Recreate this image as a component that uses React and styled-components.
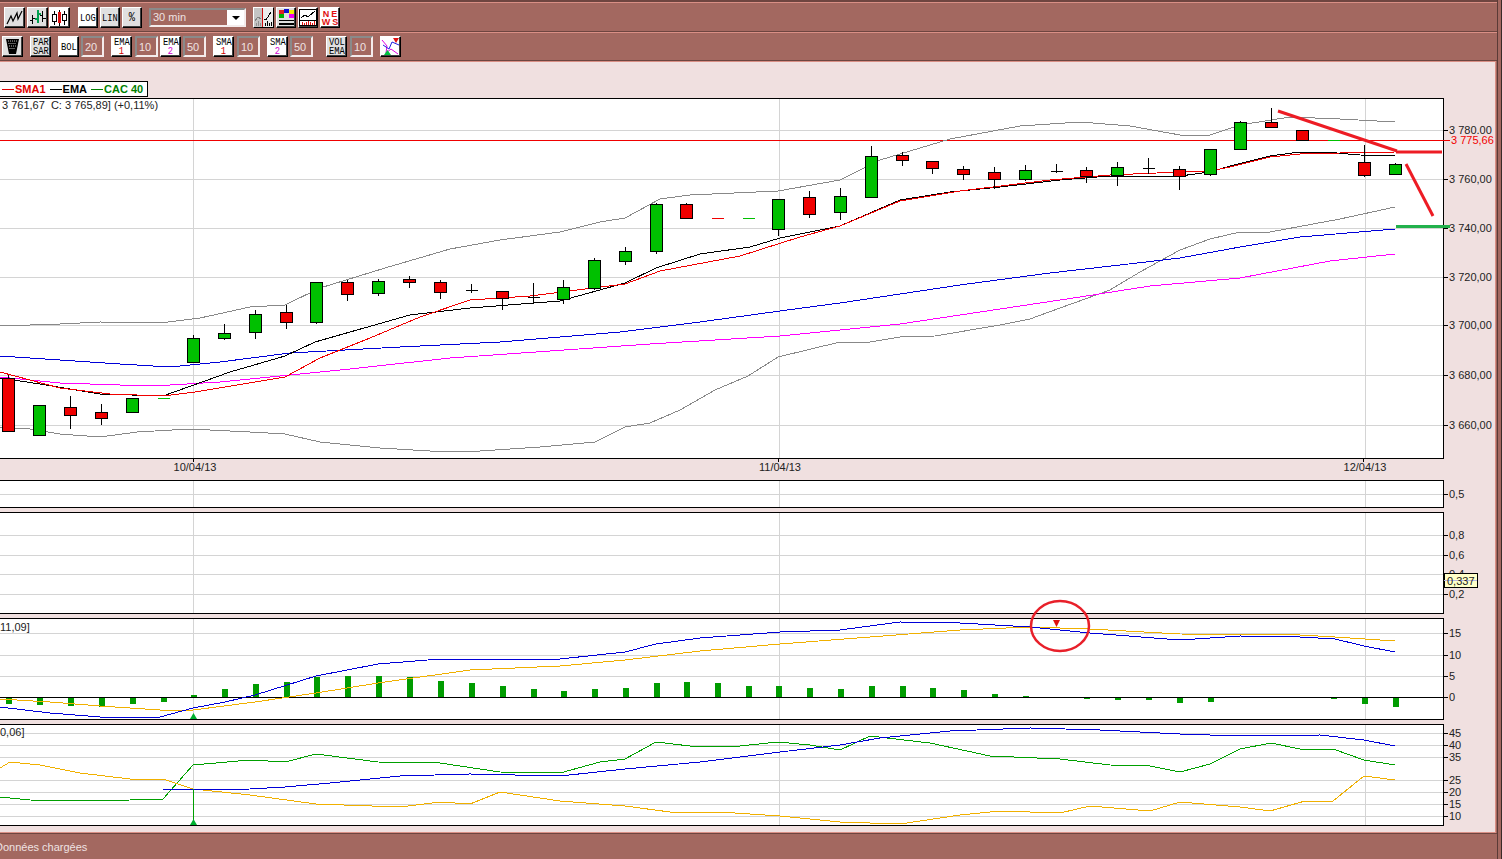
import styled, { createGlobalStyle } from "styled-components";

const GlobalStyle = createGlobalStyle`
  html, body {
    margin: 0;
    padding: 0;
    overflow: hidden;
    background: #f0e0e0;
    font-family: "Liberation Sans", Arial, sans-serif;
  }
`;

const Window = styled.div`
  width: 1502px;
  height: 859px;
  position: relative;
  display: flex;
  flex-direction: column;
  overflow: hidden;
  background: #f0e0e0;
`;

const WindowEdge = styled.div`
  position: absolute;
  top: 0;
  right: 0;
  width: 5px;
  height: 100%;
  box-sizing: border-box;
  background: #a36860;
  border-left: 1px solid #5a3a36;
  border-right: 1px solid #3a2a28;
  z-index: 2;
`;

const Toolbars = styled.div`
  height: 61px;
  box-sizing: border-box;
  background: #a36860;
  border-top: 2px solid #6e4540;
  border-bottom: 1px solid #6e4540;
  box-shadow: 0 1px 0 #d98f85;
  flex-shrink: 0;
`;

const Row = styled.div`
  height: ${(p) => p.$h}px;
  box-sizing: border-box;
  display: flex;
  align-items: center;
  padding-left: ${(p) => p.$left}px;
  border-top: 1px solid #d98f85;
  box-shadow: ${(p) => (p.$divided ? "inset 0 -1px 0 #6e4540" : "none")};
`;

const Group = styled.div`
  display: flex;
  align-items: center;
  gap: ${(p) => p.$gap ?? 3}px;
  margin-right: ${(p) => p.$after ?? 0}px;
`;

const Button = styled.div`
  width: ${(p) => p.$w ?? 21}px;
  height: 21px;
  box-sizing: border-box;
  display: flex;
  flex-direction: column;
  align-items: center;
  justify-content: center;
  background: ${(p) => (p.$on ? "#ffffff" : "#e0e0e0")};
  border: 1px solid;
  border-color: #ffffff #000000 #000000 #ffffff;
  box-shadow: inset -1px -1px 0 #404040;
  color: #000;
`;

const Label = styled.span`
  display: block;
  font-family: "Liberation Mono", "Courier New", monospace;
  font-size: ${(p) => p.$size ?? 11}px;
  line-height: ${(p) => p.$tall ?? 10}px;
  height: ${(p) => p.$tall ?? 10}px;
  color: ${(p) => p.$color ?? "#000"};
  transform: scaleX(0.8);
  white-space: nowrap;
`;

const Field = styled.input`
  width: 23px;
  height: 21px;
  box-sizing: border-box;
  padding: 0 0 0 2px;
  margin: 0;
  background: #a36860;
  border: 2px solid;
  border-color: #8a8a8a #f4ecec #f4ecec #8a8a8a;
  color: #efe2e2;
  font-family: "Liberation Sans", Arial, sans-serif;
  font-size: 11px;
  outline: none;
`;

const Combo = styled.div`
  width: 97px;
  height: 19px;
  box-sizing: border-box;
  display: flex;
  border: 2px solid;
  border-color: #8a8a8a #f4ecec #f4ecec #8a8a8a;
  margin: 0 7px;
`;

const ComboText = styled.div`
  flex: 1;
  color: #efe2e2;
  font-size: 11px;
  line-height: 15px;
  padding-left: 2px;
`;

const ComboArrow = styled.div`
  width: 17px;
  background: #fff;
  display: flex;
  align-items: center;
  justify-content: center;

  &::after {
    content: "";
    border-left: 4px solid transparent;
    border-right: 4px solid transparent;
    border-top: 4px solid #000;
  }
`;

const NewsText = styled.span`
  display: block;
  font-size: 9px;
  line-height: 8px;
  font-weight: 700;
  letter-spacing: 2px;
  margin-right: -2px;
  color: #e01010;
`;

const Workspace = styled.div`
  flex: 1;
  padding-top: 20px;
  position: relative;
`;

const WorkspaceEdge = styled.div`
  position: absolute;
  top: 0;
  right: 5px;
  width: 2px;
  height: 100%;
  box-sizing: border-box;
  background: #a36860;
  border-left: 1px solid #d98f85;
`;

const Legend = styled.div`
  width: 148px;
  height: 16px;
  box-sizing: border-box;
  display: flex;
  align-items: center;
  gap: 4px;
  padding-left: 2px;
  margin-bottom: 1px;
  background: #fff;
  border: 1px solid #000;
  border-left: none;
  font-size: 11px;
  font-weight: 700;
  white-space: nowrap;
`;

const LegendItem = styled.span`
  display: flex;
  align-items: center;
  color: ${(p) => p.$color};

  &::before {
    content: "";
    width: 12px;
    height: 1px;
    margin-right: 1px;
    background: ${(p) => p.$color};
  }
`;

const Frame = styled.div`
  width: 1444px;
  height: ${(p) => p.$h}px;
  box-sizing: border-box;
  background: #fff;
  border: 1px solid #000;
  border-left: none;
  margin-bottom: ${(p) => p.$after ?? 0}px;
`;

const Plot = styled.svg`
  display: block;
  overflow: visible;
`;

const AxisText = styled.text`
  font-family: "Liberation Sans", Arial, sans-serif;
  font-size: 11px;
  white-space: pre;
  fill: ${(p) => p.$color ?? "#222"};
`;

const DateStrip = styled.div`
  height: 21px;
  display: flex;
  gap: 485px;
  padding-left: 145px;
`;

const DateCell = styled.div`
  width: 100px;
  position: relative;
  text-align: center;
  font-size: 11px;
  line-height: 13px;
  padding-top: 2px;
  color: #222;

  &::before {
    content: "";
    position: absolute;
    top: 0;
    left: 48px;
    width: 1px;
    height: 3px;
    background: #000;
  }
`;

const Status = styled.div`
  height: 26px;
  box-sizing: border-box;
  flex-shrink: 0;
  background: #a36860;
  border-top: 1px solid #6e4540;
  box-shadow: 0 -1px 0 #d98f85;
  color: #efe2e2;
  font-size: 11px;
  line-height: 26px;
  text-indent: -5px;
`;

// all chart data below is in page pixels, read off the screen
const XS = [8, 39, 70, 101, 132, 163, 193, 224, 255, 286, 316, 347, 378, 409, 440, 471, 502, 533, 563, 594, 625, 656, 686, 717, 748, 778, 809, 840, 871, 902, 932, 963, 994, 1025, 1056, 1086, 1117, 1148, 1179, 1210, 1240, 1271, 1302, 1333, 1364, 1395];

// [high, top, bottom, low, colour] r red, g green, k black doji
const CANDLES = [
  [375, 378, 431, 431, "r"], [405, 405, 435, 436, "g"], [396, 407, 415, 429, "r"], [404, 412, 418, 425, "r"],
  [398, 398, 412, 412, "g"], [398, 398, 398, 398, "g"], [335, 338, 362, 362, "g"], [324, 333, 338, 340, "g"],
  [310, 314, 332, 339, "g"], [305, 312, 322, 329, "r"], [282, 282, 322, 324, "g"], [280, 282, 294, 301, "r"],
  [279, 281, 293, 296, "g"], [276, 279, 282, 288, "r"], [280, 282, 292, 299, "r"], [284, 290, 290, 293, "k"],
  [291, 291, 298, 310, "r"], [283, 297, 297, 303, "k"], [280, 287, 299, 304, "g"], [258, 260, 288, 290, "g"],
  [247, 251, 261, 265, "g"], [203, 204, 251, 254, "g"], [203, 204, 218, 219, "r"], [218, 218, 218, 218, "r"],
  [218, 218, 218, 218, "g"], [199, 199, 229, 236, "g"], [191, 197, 214, 218, "r"], [188, 196, 212, 220, "g"],
  [146, 156, 197, 197, "g"], [152, 155, 160, 166, "r"], [161, 161, 168, 174, "r"], [166, 169, 174, 180, "r"],
  [167, 172, 179, 189, "r"], [165, 170, 179, 181, "g"], [164, 171, 171, 173, "k"], [167, 170, 176, 183, "r"],
  [162, 167, 175, 186, "g"], [158, 168, 168, 174, "k"], [166, 169, 176, 190, "r"], [149, 149, 174, 176, "g"],
  [121, 122, 149, 150, "g"], [108, 122, 127, 127, "r"], [130, 130, 140, 140, "r"], [140, 140, 140, 140, "g"],
  [145, 162, 175, 177, "r"], [163, 164, 174, 175, "g"],
];

const BB_UP = "0,326 60,324 100,322 160,323 200,318 250,307 285,305 320,288 385,268 450,249 500,240 560,232 600,222 625,218 660,199 690,195 778,191 840,180 880,160 950,139 1020,126 1080,122 1130,126 1180,135 1210,135 1240,125 1290,117 1340,119 1395,122";
const BB_LOW = "0,427 30,429 60,434 100,437 137,432 190,429 250,432 285,434 320,442 380,448 430,451 480,451 540,447 595,442 625,427 650,423 680,410 715,390 748,376 778,357 840,342 870,342 900,337 935,336 1000,325 1030,319 1060,308 1110,290 1140,272 1180,250 1210,239 1240,232 1270,232 1340,219 1395,207";
const SMA_BLUE = "0,356 60,360 120,364 170,367 220,362 290,353 400,347 500,342 620,332 700,322 780,311 840,303 900,294 960,285 1050,273 1120,265 1180,258 1240,247 1300,237 1395,229";
const SMA_PINK = "0,377 60,383 120,385 170,385 220,382 290,375 350,369 450,358 550,351 650,344 780,336 900,324 1000,309 1080,297 1150,286 1240,278 1330,261 1395,254";
const EMA = "0,378 40,384 100,394 163,396 230,372 285,356 315,342 350,332 410,315 470,308 560,301 625,283 656,268 700,254 750,247 780,238 840,226 900,200 950,192 1000,187 1060,180 1110,176 1180,176 1210,172 1230,166 1270,156 1300,152 1325,152 1360,155 1395,156";
const SMA_RED = "0,372 60,388 110,394 163,396 195,392 285,377 320,358 370,338 420,317 470,300 530,296 625,284 660,271 740,256 800,237 840,226 900,201 960,191 1050,180 1110,175 1180,172 1210,171 1230,167 1270,157 1300,154 1340,153 1395,152";

const MACD_BARS = [-7, -8, -9, -10, -7, -5, 2, 8, 13, 15, 20, 21, 21, 20, 16, 14, 11, 8, 6, 8, 9, 14, 15, 14, 11, 11, 9, 8, 11, 11, 9, 7, 3, 1, 0, -2, -3, -3, -6, -5, -1, 0, -1, -2, -7, -10];
const MACD_BLUE = "0,707 50,713 100,717 160,717 193,708 225,702 255,695 316,676 378,664 440,659 560,659 625,652 656,644 700,638 780,632 840,630 900,622 960,623 1030,627 1090,633 1180,640 1240,636 1300,637 1335,639 1364,646 1395,652";
const MACD_ORANGE = "0,699 50,702 100,706 160,710 193,710 255,702 316,693 378,683 470,670 560,666 625,660 700,651 780,644 870,637 960,630 1030,627 1090,629 1180,634 1300,635 1335,637 1395,641";

const DMI_GREEN = "0,797 30,800 70,801 130,800 163,799 193,765 250,760 285,762 316,754 378,762 440,763 500,772 560,773 600,762 625,759 656,742 690,746 740,746 778,742 810,745 840,750 870,736 930,743 990,756 1060,759 1110,765 1150,766 1180,772 1210,764 1240,749 1271,743 1300,749 1333,749 1364,760 1395,765";
const DMI_BLUE = "163,789 193,790 250,789 285,787 330,783 400,776 470,774 560,776 625,769 700,762 780,752 840,745 880,738 950,731 1030,728 1100,730 1180,734 1240,736 1320,735 1364,740 1395,746";
const DMI_ORANGE = "0,768 10,762 40,765 80,773 130,779 163,779 193,789 250,795 316,804 400,807 440,802 470,804 500,792 560,801 625,806 670,812 720,812 780,816 840,822 900,824 960,815 1000,811 1060,813 1090,806 1150,811 1180,802 1240,807 1270,811 1305,801 1333,801 1364,776 1395,780";

const CANDLE_COLOR = { r: "#f00000", g: "#00c000", k: "#000000" };

const Curve = ({ points, color, width = 1 }) => (
  <polyline points={points} fill="none" stroke={color} strokeWidth={width} shapeRendering="crispEdges" />
);

const Grid = ({ rows, top, bottom }) => (
  <g stroke="#d4d4d4" shapeRendering="crispEdges">
    {rows.map((y) => (
      <line key={y} x1="0" x2="1443" y1={y + 0.5} y2={y + 0.5} />
    ))}
    {[193, 779, 1365].map((x) => (
      <line key={x} x1={x + 0.5} x2={x + 0.5} y1={top} y2={bottom} />
    ))}
  </g>
);

const Axis = ({ ticks }) => (
  <g>
    {ticks.map(([y, text]) => (
      <g key={text}>
        <line x1="1443" x2="1448" y1={y + 0.5} y2={y + 0.5} stroke="#000" shapeRendering="crispEdges" />
        <AxisText x="1449" y={y + 4}>{text}</AxisText>
      </g>
    ))}
  </g>
);

const Pane = ({ top, h, after, children }) => (
  <Frame $h={h} $after={after}>
    <Plot width="1443" height={h - 2} viewBox={`0 ${top + 1} 1443 ${h - 2}`}>
      {children}
    </Plot>
  </Frame>
);

const Candles = () => (
  <g shapeRendering="crispEdges">
    {CANDLES.map(([high, bodyTop, bodyBottom, low, c], i) => {
      const x = XS[i] + 0.5;
      if (bodyTop === bodyBottom && high === low) {
        return <line key={i} x1={x - 6} x2={x + 6} y1={bodyTop + 0.5} y2={bodyTop + 0.5} stroke={CANDLE_COLOR[c]} />;
      }
      if (bodyTop === bodyBottom) {
        return (
          <g key={i} stroke="#000">
            <line x1={x} x2={x} y1={high} y2={low} />
            <line x1={x - 6} x2={x + 6} y1={bodyTop + 0.5} y2={bodyTop + 0.5} />
          </g>
        );
      }
      return (
        <g key={i} stroke="#000">
          <line x1={x} x2={x} y1={high} y2={low} />
          <rect x={x - 6} y={bodyTop + 0.5} width="12" height={bodyBottom - bodyTop} fill={CANDLE_COLOR[c]} />
        </g>
      );
    })}
  </g>
);

const Triangle = ({ x, y, color, down }) => (
  <polygon
    points={down ? `${x - 3},${y} ${x + 4},${y} ${x + 0.5},${y + 7}` : `${x - 3},${y + 6} ${x + 4},${y + 6} ${x + 0.5},${y}`}
    fill={color}
  />
);

const LineIcon = () => (
  <svg width="17" height="15" viewBox="0 0 17 15">
    <polyline points="1,14 5,6 7,11 11,3 12,9 16,1" fill="none" stroke="#000" strokeWidth="1.2" />
  </svg>
);

const BarsIcon = () => (
  <svg width="17" height="17" viewBox="0 0 17 17" shapeRendering="crispEdges">
    <path d="M3.5 6v9M1 11h3M3.5 9h3M13.5 2v11M11 6h3M13.5 9h3" stroke="#000" fill="none" />
    <path d="M8.5 1v13M6 10h3M8.5 5h3" stroke="#00a050" strokeWidth="2" fill="none" />
  </svg>
);

const CandleIcon = () => (
  <svg width="17" height="17" viewBox="0 0 17 17" shapeRendering="crispEdges">
    <path d="M3.5 2v14M13.5 2v14" stroke="#000" />
    <rect x="1.5" y="5.5" width="4" height="7" fill="#fff" stroke="#000" />
    <path d="M8.5 1v16" stroke="#000" />
    <rect x="7" y="3" width="3" height="11" fill="#e01010" />
    <rect x="11.5" y="5.5" width="4" height="6" fill="#fff" stroke="#000" />
  </svg>
);

const TrashIcon = () => (
  <svg width="15" height="17" viewBox="0 0 15 17">
    <path d="M1 1h13l-3 15H4z" fill="#000" />
    <path d="M3 3h9M3.5 5.5h8M4 8h7M4.5 10.5h6" stroke="#b8b8b8" strokeDasharray="1 1" fill="none" />
  </svg>
);

const CrossIcon = () => (
  <svg width="19" height="19" viewBox="0 0 19 19">
    <polyline points="1,3 6,9 5,16 10,12 17,17" fill="none" stroke="#e000e0" />
    <polyline points="2,8 8,12 11,5 18,8" fill="none" stroke="#2020e0" />
    <polygon points="12,1 18,1 15,6" fill="#e01010" />
    <polygon points="3,18 10,18 6.5,13" fill="#00c040" />
  </svg>
);

const CursorIcon = () => (
  <svg width="19" height="19" viewBox="0 0 19 19" shapeRendering="crispEdges">
    <rect x="0" y="0" width="8" height="19" fill="#c4c4c4" />
    <rect x="8" y="0" width="11" height="19" fill="#ececec" />
    <path d="M8.5 0v19" stroke="#d01010" />
    <path d="M1 13l3-4 3 2" stroke="#808080" fill="none" />
    <path d="M10 11l2 1 5-8" stroke="#000" fill="none" />
    <path d="M2 18v-3M4 18v-5M6 18v-3" stroke="#909090" />
    <path d="M11 18v-3M13 18v-5M15 18v-3M17 18v-4" stroke="#000" />
  </svg>
);

const PaletteIcon = () => (
  <svg width="17" height="17" viewBox="0 0 17 17" shapeRendering="crispEdges">
    <rect x="1" y="1" width="5" height="4" fill="#e02020" />
    <rect x="6" y="0" width="5" height="4" fill="#1010d0" />
    <rect x="11" y="1" width="5" height="4" fill="#f0f000" />
    <rect x="1" y="5" width="5" height="4" fill="#00b000" />
    <rect x="11" y="5" width="5" height="4" fill="#f000f0" />
    <rect x="1" y="11" width="15" height="1" fill="#000" />
    <rect x="1" y="14" width="15" height="2" fill="#000" />
  </svg>
);

const StudyIcon = () => (
  <svg width="18" height="17" viewBox="0 0 18 17" shapeRendering="crispEdges">
    <rect x="0.5" y="0.5" width="17" height="16" fill="#fff" stroke="#000" />
    <path d="M2 9l4-3 3 2 7-6" stroke="#000" fill="none" />
    <path d="M1 11.5h16" stroke="#000" />
    <path d="M3 16v-3M5 16v-2M7 16v-3M9 16v-4M11 16v-3M13 16v-2M15 16v-4" stroke="#e01010" />
  </svg>
);

const AverageButton = ({ kind, period, color }) => (
  <Button $on>
    <Label>{kind}</Label>
    <Label $color={color} $tall={9}>{period}</Label>
  </Button>
);

export default function App() {
  return (
    <>
      <GlobalStyle />
      <Window>
        <WindowEdge />
        <Toolbars>
          <Row $h={30} $left={4} $divided>
            <Group $gap={1.5} $after={8}>
              <Button><LineIcon /></Button>
              <Button><BarsIcon /></Button>
              <Button $on><CandleIcon /></Button>
            </Group>
            <Group $gap={2}>
              <Button $w={20} $on><Label>LOG</Label></Button>
              <Button $w={20}><Label>LIN</Label></Button>
              <Button $w={20}><Label $size={13}>%</Label></Button>
            </Group>
            <Combo>
              <ComboText>30 min</ComboText>
              <ComboArrow />
            </Combo>
            <Group $gap={2}>
              <Button><CursorIcon /></Button>
              <Button $w={20}><PaletteIcon /></Button>
              <Button $w={20} $on><StudyIcon /></Button>
              <Button $w={20} $on>
                <NewsText>NE</NewsText>
                <NewsText>WS</NewsText>
              </Button>
            </Group>
          </Row>
          <Row $h={28} $left={2}>
            <Group $after={7}><Button><TrashIcon /></Button></Group>
            <Group $after={7}>
              <Button>
                <Label>PAR</Label>
                <Label $tall={9}>SAR</Label>
              </Button>
            </Group>
            <Group $gap={2} $after={7}>
              <Button $on><Label>BOL</Label></Button>
              <Field readOnly value="20" />
            </Group>
            <Group $after={2}>
              <AverageButton kind="EMA" period="1" color="#d00000" />
              <Field readOnly value="10" />
            </Group>
            <Group $gap={2} $after={7}>
              <AverageButton kind="EMA" period="2" color="#d000d0" />
              <Field readOnly value="50" />
            </Group>
            <Group $after={7}>
              <AverageButton kind="SMA" period="1" color="#d00000" />
              <Field readOnly value="10" />
            </Group>
            <Group $gap={2} $after={13}>
              <AverageButton kind="SMA" period="2" color="#d000d0" />
              <Field readOnly value="50" />
            </Group>
            <Group $after={7}>
              <Button>
                <Label>VOL</Label>
                <Label $tall={9}>EMA</Label>
              </Button>
              <Field readOnly value="10" />
            </Group>
            <Button $on><CrossIcon /></Button>
          </Row>
        </Toolbars>

        <Workspace>
          <WorkspaceEdge />
          <Legend>
            <LegendItem $color="#e00000">SMA1</LegendItem>
            <LegendItem $color="#000">EMA</LegendItem>
            <LegendItem $color="#008000">CAC 40</LegendItem>
          </Legend>

          <Pane top={98} h={361}>
            <Grid rows={[130, 179, 228, 277, 325, 375, 425]} top={99} bottom={458} />
            <AxisText x="2" y="109">3 761,67  C: 3 765,89] (+0,11%)</AxisText>
            <line x1="0" x2="1443" y1="140.5" y2="140.5" stroke="#f00000" shapeRendering="crispEdges" />
            <Curve points={BB_UP} color="#888888" />
            <Curve points={BB_LOW} color="#888888" />
            <Curve points={SMA_BLUE} color="#0000d8" />
            <Curve points={SMA_PINK} color="#ff00ff" />
            <Curve points={EMA} color="#000000" />
            <Curve points={SMA_RED} color="#f00000" />
            <Candles />
            <Axis ticks={[[130, "3 780,00"], [179, "3 760,00"], [228, "3 740,00"], [277, "3 720,00"], [325, "3 700,00"], [375, "3 680,00"], [425, "3 660,00"]]} />
            <rect x="1444" y="134" width="50" height="13" fill="#f0e0e0" />
            <line x1="1443" x2="1450" y1="140.5" y2="140.5" stroke="#f00000" shapeRendering="crispEdges" />
            <AxisText x="1451" y="144" $color="#f00000">3 775,66</AxisText>
            {/* lines drawn by hand on top of the chart */}
            <g fill="none" strokeWidth="3">
              <polyline points="1278,111 1397,151" stroke="#ed1c24" />
              <line x1="1396" x2="1442" y1="152" y2="152" stroke="#ed1c24" />
              <line x1="1406" x2="1433" y1="164" y2="216" stroke="#ed1c24" />
              <line x1="1396" x2="1450" y1="226.5" y2="226.5" stroke="#22b14c" />
            </g>
          </Pane>

          <DateStrip>
            <DateCell>10/04/13</DateCell>
            <DateCell>11/04/13</DateCell>
            <DateCell>12/04/13</DateCell>
          </DateStrip>

          <Pane top={480} h={28} after={4}>
            <Grid rows={[494]} top={481} bottom={507} />
            <Axis ticks={[[494, "0,5"]]} />
          </Pane>

          <Pane top={512} h={102} after={4}>
            <Grid rows={[535, 555, 574, 594]} top={513} bottom={613} />
            <Axis ticks={[[535, "0,8"], [555, "0,6"], [574, "0,4"], [594, "0,2"]]} />
            <rect x="1444.5" y="573.5" width="33" height="14" fill="#ffffc8" stroke="#000" shapeRendering="crispEdges" />
            <line x1="1444" x2="1477" y1="580.5" y2="580.5" stroke="#b8b8e0" shapeRendering="crispEdges" />
            <AxisText x="1447" y="585">0,337</AxisText>
          </Pane>

          <Pane top={618} h={102} after={4}>
            <Grid rows={[633, 655, 676]} top={619} bottom={719} />
            {MACD_BARS.map((v, i) =>
              v === 0 ? null : (
                <rect
                  key={i}
                  x={XS[i] - 2}
                  y={v > 0 ? 697 - v : 697}
                  width="6"
                  height={Math.abs(v)}
                  fill="#009c00"
                  shapeRendering="crispEdges"
                />
              )
            )}
            <line x1="0" x2="1443" y1="697.5" y2="697.5" stroke="#000" shapeRendering="crispEdges" />
            <Curve points={MACD_ORANGE} color="#f0b000" />
            <Curve points={MACD_BLUE} color="#0000d8" />
            <Triangle x={193} y={713} color="#00b030" />
            <Triangle x={1056} y={620} color="#e01010" down />
            <AxisText x="0" y="631">11,09]</AxisText>
            <Axis ticks={[[633, "15"], [655, "10"], [676, "5"], [697, "0"]]} />
            <ellipse cx="1060" cy="626" rx="29" ry="25" fill="none" stroke="#e8202a" strokeWidth="2.5" />
          </Pane>

          <Pane top={724} h={102}>
            <Grid rows={[733, 745, 757, 780, 792, 804, 816]} top={725} bottom={825} />
            <Curve points={DMI_GREEN} color="#00a000" />
            <Curve points={DMI_ORANGE} color="#f0b000" />
            <Curve points={DMI_BLUE} color="#0000d8" />
            <line x1="193.5" x2="193.5" y1="789" y2="820" stroke="#00a000" shapeRendering="crispEdges" />
            <Triangle x={193} y={819} color="#00b030" />
            <AxisText x="0" y="736">0,06]</AxisText>
            <Axis ticks={[[733, "45"], [745, "40"], [757, "35"], [780, "25"], [792, "20"], [804, "15"], [816, "10"]]} />
          </Pane>
        </Workspace>

        <Status>Données chargées</Status>
      </Window>
    </>
  );
}
